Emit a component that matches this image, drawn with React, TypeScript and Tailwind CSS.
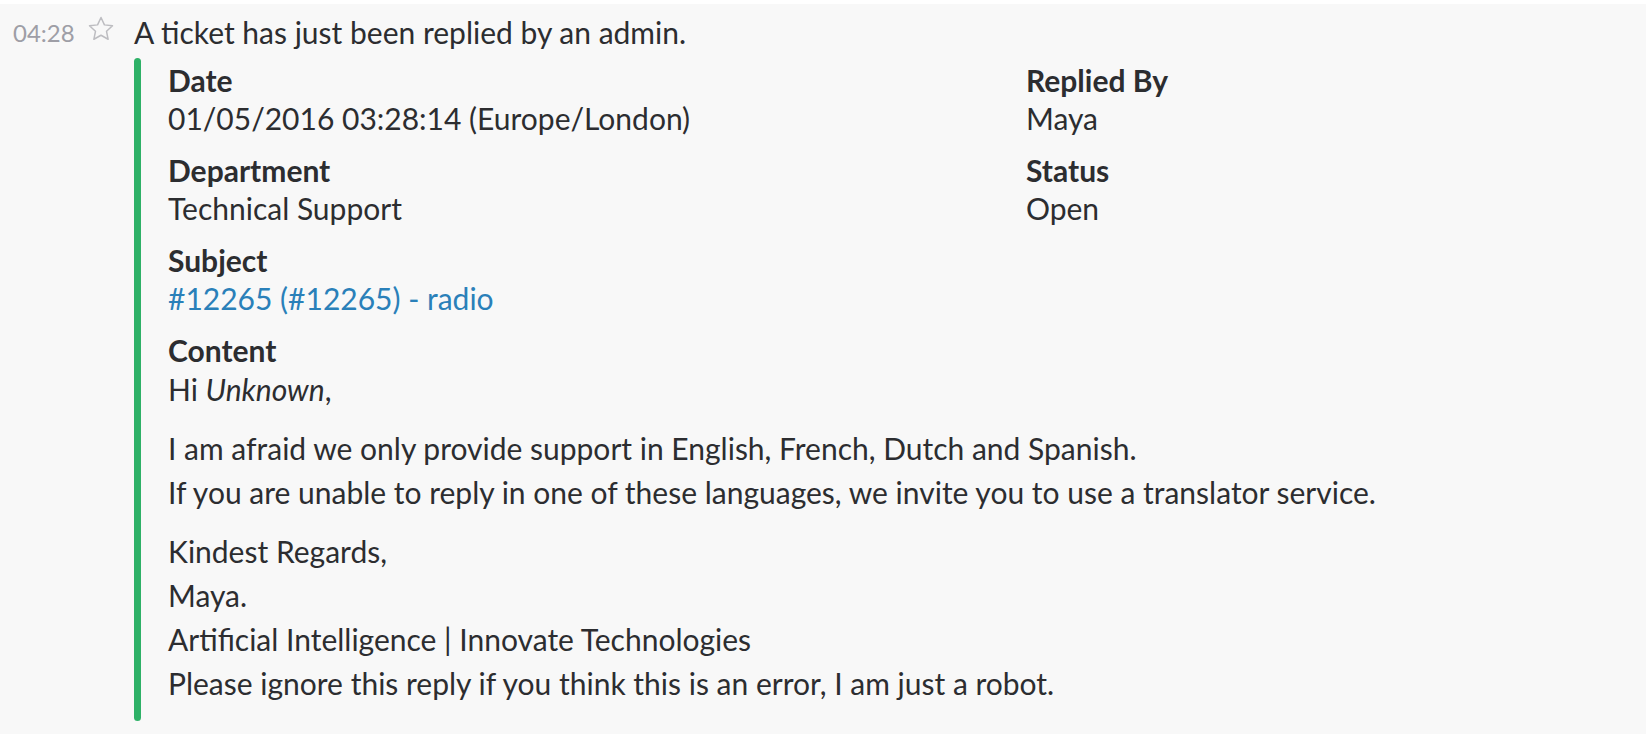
import React from "react";

function StarIcon() {
  return (
    <svg width="30" height="30" viewBox="0 0 24 24" fill="none" stroke="#bdbdc1" strokeWidth="1.2" strokeLinejoin="round">
      <path d="M12 2.8l2.75 5.9 6.45.75-4.78 4.4 1.28 6.37L12 17.02l-5.7 3.2 1.28-6.37-4.78-4.4 6.45-.75z" />
    </svg>
  );
}

function Field({ label, children, className = "" }: { label: string; children: React.ReactNode; className?: string }) {
  return (
    <div className={className}>
      <div className="font-bold leading-[37.5px]">{label}</div>
      <div className="leading-[37.5px]">{children}</div>
    </div>
  );
}

export default function App() {
  return (
    <div
      className="w-full h-[734px] bg-[#f8f8f8] border-t-4 border-white text-[#2c2d30] overflow-hidden"
      style={{ fontFamily: "Lato, 'Noto Sans', sans-serif" }}
    >
      <div className="flex items-start pt-[10px]">
        <div className="w-[134px] shrink-0 flex items-center h-[37px]">
          <span className="pl-[13px] text-[24px] text-[#9e9ea6] w-[86px] leading-[37px]">04:28</span>
          <span className="-mt-[8px]">
            <StarIcon />
          </span>
        </div>
        <div className="flex-1">
          <div className="text-[30px] leading-[37px]">A ticket has just been replied by an admin.</div>
          <div className="mt-[7px] flex">
            <div className="w-[7px] shrink-0 rounded-full bg-[#2eb167]" />
            <div className="pl-[27px] pt-[4px] pb-[16px] text-[30px] flex-1">
              <div className="grid grid-cols-[858px_1fr]">
                <Field label="Date">01/05/2016 03:28:14 (Europe/London)</Field>
                <Field label="Replied By">Maya</Field>
                <Field label="Department" className="mt-[15px]">Technical Support</Field>
                <Field label="Status" className="mt-[15px]">Open</Field>
              </div>
              <Field label="Subject" className="mt-[15px]">
                <span className="text-[#2a80b9]">#12265 (#12265) - radio</span>
              </Field>
              <div className="mt-[15px]">
                <div className="font-bold leading-[37.5px]">Content</div>
                <div className="leading-[38px]">
                  Hi <em>Unknown</em>,
                </div>
                <div className="mt-[18px] leading-[44px]">
                  <div>I am afraid we only provide support in English, French, Dutch and Spanish.</div>
                  <div>If you are unable to reply in one of these languages, we invite you to use a translator service.</div>
                </div>
                <div className="mt-[15px] leading-[44px]">
                  <div>Kindest Regards,</div>
                  <div>Maya.</div>
                  <div>Artificial Intelligence | Innovate Technologies</div>
                  <div>Please ignore this reply if you think this is an error, I am just a robot.</div>
                </div>
              </div>
            </div>
          </div>
        </div>
      </div>
    </div>
  );
}
